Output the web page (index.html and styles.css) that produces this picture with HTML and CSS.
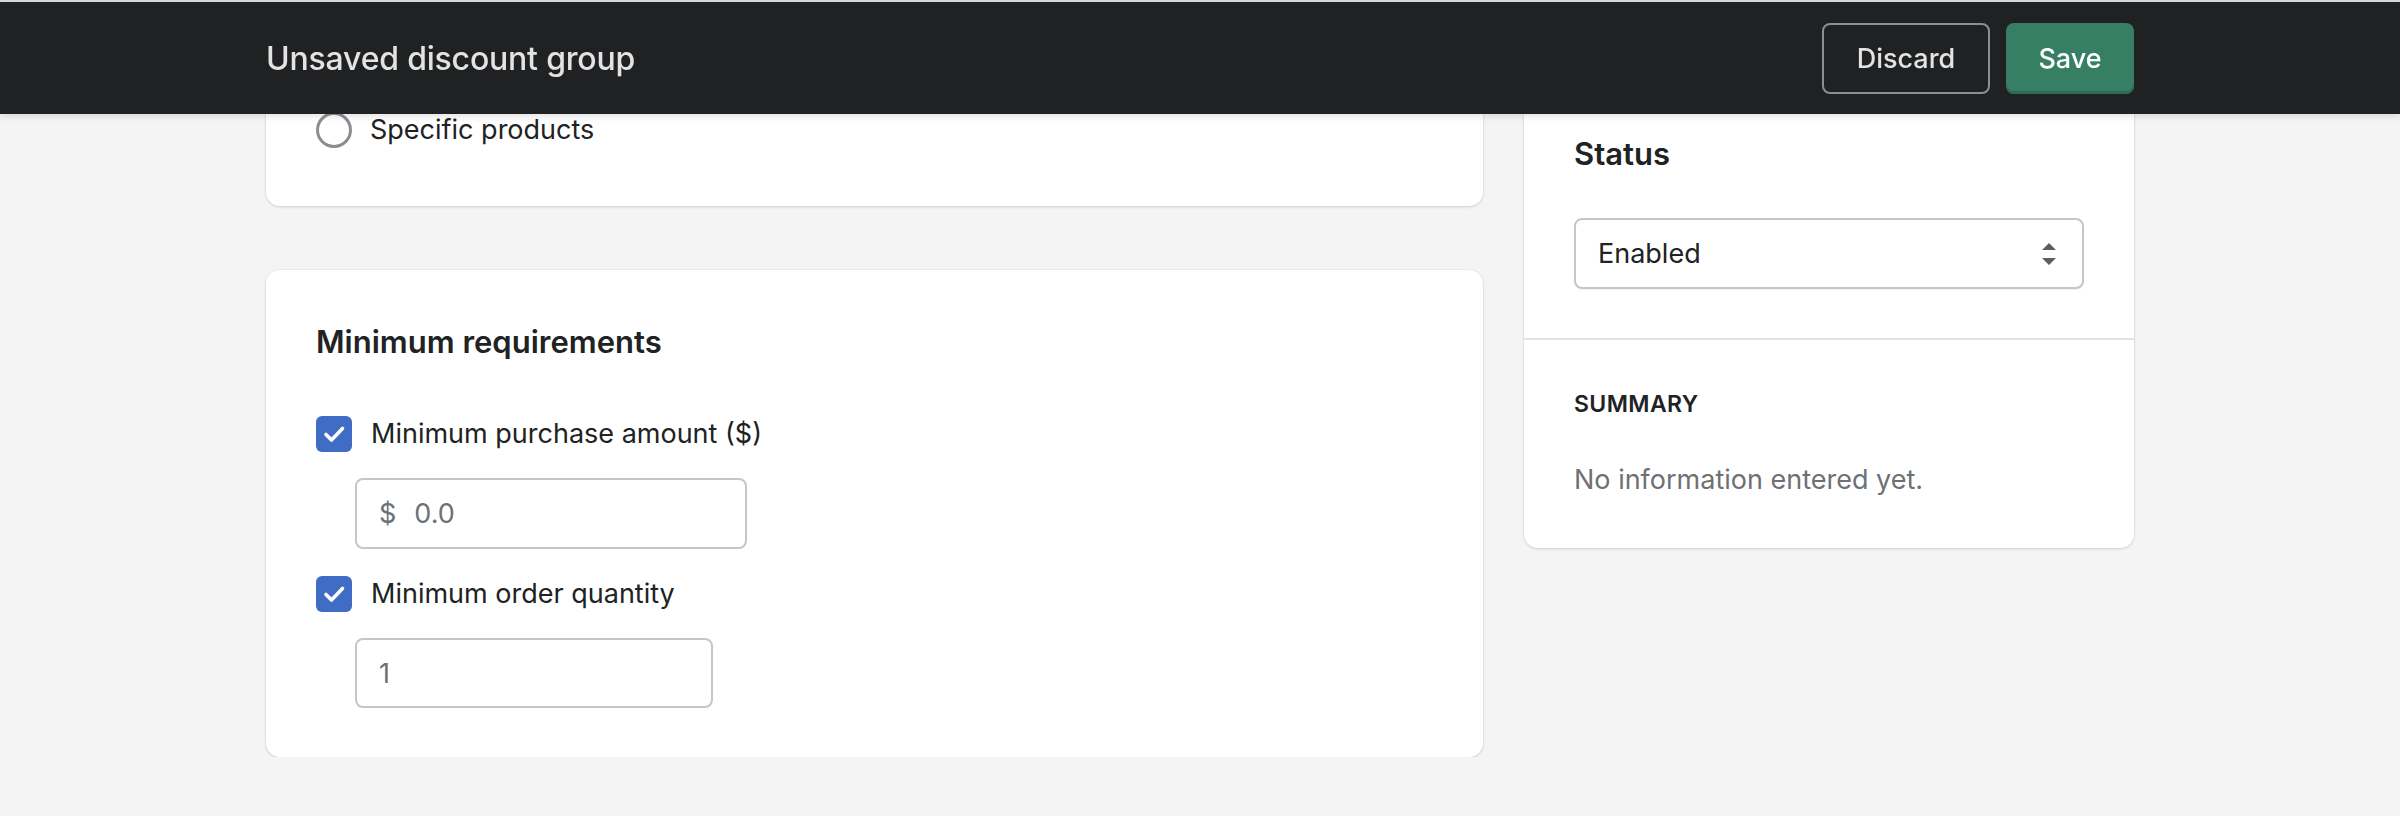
FILE: index.html
```html
<!DOCTYPE html>
<html lang="en">
<head>
<meta charset="utf-8">
<title>Unsaved discount group</title>
<link rel="stylesheet" href="styles.css">
</head>
<body>
<header class="topbar">
  <div class="topbar-inner">
    <div class="topbar-title">Unsaved discount group</div>
    <div class="topbar-actions">
      <button class="btn btn-discard" type="button">Discard</button>
      <button class="btn btn-save" type="button">Save</button>
    </div>
  </div>
</header>

<main class="layout">
  <div class="col-main">
    <section class="card card-applies">
      <div class="radio-list">
        <label class="radio-row"><span class="radio"></span><span class="row-label">Specific products</span></label>
      </div>
    </section>

    <section class="card card-min">
      <h2 class="card-title">Minimum requirements</h2>
      <div class="req-list">
        <label class="check-row">
          <span class="checkbox">
            <svg viewBox="0 0 36 36" width="36" height="36"><path d="M10 18.5 L15.5 24 L26.5 12.5" fill="none" stroke="#fff" stroke-width="3.6" stroke-linecap="round" stroke-linejoin="round"/></svg>
          </span>
          <span class="row-label">Minimum purchase amount ($)</span>
        </label>
        <div class="field field-amount"><span class="prefix">$</span><span class="placeholder">0.0</span></div>
        <label class="check-row">
          <span class="checkbox">
            <svg viewBox="0 0 36 36" width="36" height="36"><path d="M10 18.5 L15.5 24 L26.5 12.5" fill="none" stroke="#fff" stroke-width="3.6" stroke-linecap="round" stroke-linejoin="round"/></svg>
          </span>
          <span class="row-label">Minimum order quantity</span>
        </label>
        <div class="field field-qty"><span class="placeholder">1</span></div>
      </div>
    </section>
  </div>

  <aside class="col-side">
    <section class="card card-side">
      <div class="side-section">
        <h2 class="card-title">Status</h2>
        <div class="select">
          <span class="select-value">Enabled</span>
          <svg class="select-arrows" viewBox="0 0 14 22" width="14" height="22"><path d="M7 0 L14 7 L0 7 Z M0 15 L14 15 L7 22 Z" fill="#5c5f62"/></svg>
        </div>
      </div>
      <div class="side-section side-summary">
        <h3 class="summary-title">SUMMARY</h3>
        <p class="summary-text">No information entered yet.</p>
      </div>
    </section>
  </aside>
</main>
</body>
</html>
```

FILE: styles.css
```css
* { box-sizing: border-box; }

html, body {
  margin: 0;
  padding: 0;
}

body {
  background: #f4f4f4;
  font-family: Inter, "Noto Sans", "Liberation Sans", sans-serif;
  color: #202223;
  overflow: hidden;
}

.topbar {
  position: fixed;
  top: 0;
  left: 0;
  right: 0;
  height: 114px;
  background: #202123;
  border-top: 2px solid #d6d6d6;
  box-shadow: 0 2px 8px rgba(0, 0, 0, 0.12);
  z-index: 10;
}

.topbar-inner {
  width: 1868px;
  height: 100%;
  margin: 0 auto;
  display: flex;
  align-items: center;
  justify-content: space-between;
}

.topbar-title {
  font-size: 32px;
  font-weight: 500;
  color: #e3e3e3;
  letter-spacing: -0.2px;
}

.topbar-actions {
  display: flex;
  gap: 16px;
}

.btn {
  height: 71px;
  border-radius: 8px;
  font-family: inherit;
  font-size: 27px;
  font-weight: 500;
  padding: 0;
  cursor: pointer;
}

.btn-discard {
  width: 168px;
  background: transparent;
  border: 2px solid #8e8e90;
  color: #e3e3e3;
}

.btn-save {
  width: 128px;
  background: #367f64;
  border: none;
  box-shadow: inset 0 -3px 0 #2c6b53;
  color: #ffffff;
}

.layout {
  width: 1868px;
  margin: 0 auto;
  display: grid;
  grid-template-columns: 1217px 610px;
  column-gap: 41px;
  align-items: start;
}

.col-main {
  display: flex;
  flex-direction: column;
  gap: 64px;
}

.col-side {
  margin-top: 82px;
}

.card {
  background: #ffffff;
  border-radius: 14px;
  box-shadow: 0 1px 3px rgba(0, 0, 0, 0.14), 0 0 0 1px rgba(0, 0, 0, 0.02);
}

.card-title {
  margin: 0;
  font-size: 31px;
  line-height: 44px;
  font-weight: 600;
  color: #202223;
}

.row-label {
  font-size: 27px;
  line-height: 36px;
  color: #202223;
}

/* Applies-to card (top part scrolled under the bar) */
.card-applies {
  padding: 112px 50px 58px;
}

.radio-list {
  display: flex;
  flex-direction: column;
  gap: 18px;
}

.radio-row {
  display: flex;
  align-items: center;
  gap: 18px;
  height: 36px;
}

.radio {
  width: 36px;
  height: 36px;
  border-radius: 50%;
  border: 3px solid #8a8e93;
  background: #fff;
  flex: none;
}

/* Minimum requirements card */
.card-min {
  padding: 50px 50px 49px;
}

.req-list {
  margin-top: 52px;
  display: flex;
  flex-direction: column;
  align-items: flex-start;
}

.check-row {
  display: flex;
  align-items: center;
  gap: 19px;
  height: 36px;
}

.checkbox {
  width: 36px;
  height: 36px;
  border-radius: 6px;
  background: #3f6dc6;
  flex: none;
  display: flex;
}

.field {
  margin: 26px 0 27px 39px;
  height: 71px;
  border: 2px solid #c4c6c9;
  border-radius: 8px;
  background: #fff;
  display: flex;
  align-items: center;
  padding-left: 22px;
  font-size: 27px;
  color: #6d7175;
}

.field-amount { width: 392px; }

.field-qty {
  width: 358px;
  height: 70px;
  margin-bottom: 0;
}

.prefix {
  margin-right: 18px;
}

/* Side card */
.side-section {
  padding: 50px 50px 49px;
}

.side-section + .side-section {
  border-top: 2px solid #e1e3e5;
}

.select {
  margin-top: 42px;
  height: 71px;
  border: 2px solid #c4c6c9;
  border-radius: 8px;
  box-shadow: 0 1px 1px rgba(0, 0, 0, 0.06);
  display: flex;
  align-items: center;
  justify-content: space-between;
  padding: 0 26px 0 22px;
}

.select-value {
  font-size: 27px;
  color: #202223;
}

.select-arrows {
  display: block;
}

.side-summary {
  padding: 48px 50px 48px;
}

.summary-title {
  margin: 0;
  font-size: 23px;
  line-height: 32px;
  font-weight: 600;
  letter-spacing: 0.4px;
  color: #202223;
}

.summary-text {
  margin: 40px 0 0;
  font-size: 27px;
  line-height: 40px;
  color: #6d7175;
}
```
